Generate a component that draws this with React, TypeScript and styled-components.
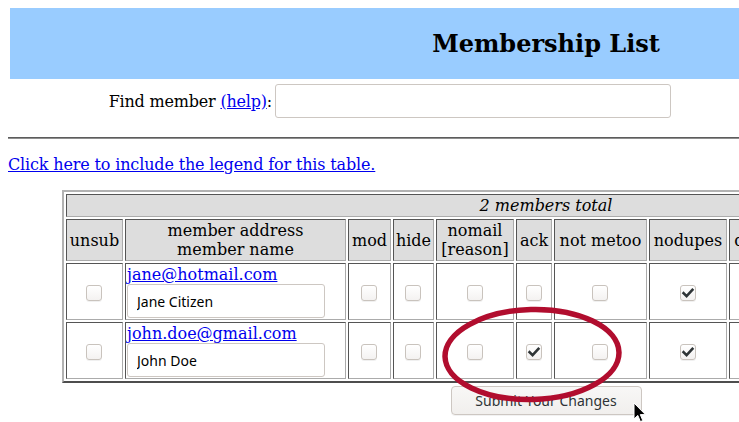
import React from "react";
import styled, { createGlobalStyle } from "styled-components";

const GlobalStyle = createGlobalStyle`
  html, body {
    margin: 0;
    padding: 0;
    overflow: hidden;
    background: #ffffff;
  }
  body {
    font-family: "DejaVu Serif", serif;
    font-size: 16px;
    color: #000000;
  }
`;

const Page = styled.div`
  position: relative;
  width: 1076px;
  padding: 8px;
`;

const TitleBar = styled.div`
  margin: 0 2px;
  height: 71px;
  background: #99ccff;
  display: flex;
  align-items: center;
  justify-content: center;
`;

const Title = styled.h1`
  margin: 0;
  font-family: "DejaVu Serif", serif;
  font-size: 24px;
  font-weight: bold;
`;

const FindRow = styled.div`
  display: grid;
  grid-template-columns: 264px 396px;
  column-gap: 3px;
  align-items: center;
  margin-top: 5px;
`;

const FindLabel = styled.label`
  text-align: right;
  letter-spacing: -0.2px;
`;

const Link = styled.a`
  color: #0000ee;
  text-decoration: underline;
`;

const TextField = styled.input<{ $w: number }>`
  display: block;
  box-sizing: border-box;
  width: ${(p) => p.$w}px;
  height: 34px;
  margin: 0;
  padding: 0 9px;
  border: 1px solid #cdc7c2;
  border-radius: 3px;
  background: #ffffff;
  font-family: "Noto Sans", sans-serif;
  font-size: 14px;
  color: #000000;
  outline: none;
`;

const Rule = styled.hr`
  margin: 19px 0 0;
  height: 0;
  border: none;
  border-top: 1px solid #5c5c5c;
  border-bottom: 1px solid #8e8e8e;
`;

const LegendLine = styled.p`
  margin: 16px 0 0;
  letter-spacing: -0.15px;
`;

const MembersTable = styled.table`
  width: 968px;
  margin: 16px auto 0;
  table-layout: fixed;
  border-collapse: separate;
  border-spacing: 2px;
  border: 2px solid;
  border-color: #b2b2b2 #4e4e4e #4e4e4e #b2b2b2;
`;

const Col = styled.col<{ $w: number }>`
  width: ${(p) => p.$w}px;
`;

const Cell = styled.td<{ $head?: boolean; $align?: "left" | "center" }>`
  box-sizing: border-box;
  padding: 1px;
  border: 1px solid;
  border-color: #555555 #ababab #ababab #555555;
  background: ${(p) => (p.$head ? "#dddddd" : "#ffffff")};
  text-align: ${(p) => p.$align ?? "center"};
  vertical-align: middle;
  white-space: nowrap;
  overflow: hidden;
`;

const Caption = styled.em`
  font-style: italic;
`;

const Box = styled.span<{ $on?: boolean }>`
  display: inline-flex;
  align-items: center;
  justify-content: center;
  box-sizing: border-box;
  width: 16px;
  height: 16px;
  vertical-align: middle;
  border: 1px solid #c9c3bd;
  border-radius: 3px;
  background: linear-gradient(#ffffff, #f4f2f1);
  box-shadow: 0 1px 0 rgba(0, 0, 0, 0.06);
`;

const MemberLink = styled(Link)`
  display: block;
  line-height: normal;
`;

const LangSelect = styled.select`
  font-family: "Noto Sans", sans-serif;
  font-size: 14px;
`;

const ButtonRow = styled.div`
  display: flex;
  justify-content: center;
  margin-top: 3px;
`;

const SubmitButton = styled.button`
  box-sizing: border-box;
  width: 191px;
  height: 29px;
  padding: 0;
  border: 1px solid #cdc7c2;
  border-radius: 4px;
  background: linear-gradient(#f8f7f6, #f1efed);
  box-shadow: 0 1px 0 rgba(0, 0, 0, 0.05);
  font-family: "Noto Sans", sans-serif;
  font-size: 14px;
  color: #2e3436;
`;

const Annotation = styled.svg`
  position: absolute;
  left: 436px;
  top: 302px;
  pointer-events: none;
`;

const Pointer = styled.svg`
  position: absolute;
  left: 633px;
  top: 402px;
  pointer-events: none;
`;

function Check({ on }: { on?: boolean }) {
  return (
    <Box $on={on}>
      {on && (
        <svg width="14" height="14" viewBox="0 0 14 14">
          <path
            d="M2.6 7.2 L5.6 10.1 L11.4 3.9"
            fill="none"
            stroke="#2e3436"
            strokeWidth="2.6"
            strokeLinecap="square"
          />
        </svg>
      )}
    </Box>
  );
}

type Member = {
  email: string;
  name: string;
  flags: boolean[];
};

const members: Member[] = [
  {
    email: "jane@hotmail.com",
    name: "Jane Citizen",
    flags: [false, false, false, false, false, false, true, false, false],
  },
  {
    email: "john.doe@gmail.com",
    name: "John Doe",
    flags: [false, false, false, false, true, false, true, false, false],
  },
];

const colWidths = [57, 221, 43, 41, 78, 36, 93, 78, 60, 55, 178];

export default function App() {
  return (
    <>
      <GlobalStyle />
      <Page>
        <TitleBar>
          <Title>Membership List</Title>
        </TitleBar>
        <FindRow>
          <FindLabel>
            Find member <Link href="#">(help)</Link>:
          </FindLabel>
          <TextField $w={396} type="text" defaultValue="" />
        </FindRow>
        <Rule />
        <LegendLine>
          <Link href="#">Click here to include the legend for this table.</Link>
        </LegendLine>
        <MembersTable>
          <colgroup>
            {colWidths.map((w, i) => (
              <Col key={i} $w={w} />
            ))}
          </colgroup>
          <tbody>
            <tr>
              <Cell $head colSpan={11}>
                <Caption>2 members total</Caption>
              </Cell>
            </tr>
            <tr>
              <Cell $head>unsub</Cell>
              <Cell $head>
                member address
                <br />
                member name
              </Cell>
              <Cell $head>mod</Cell>
              <Cell $head>hide</Cell>
              <Cell $head>
                nomail
                <br />
                [reason]
              </Cell>
              <Cell $head>ack</Cell>
              <Cell $head>not metoo</Cell>
              <Cell $head>nodupes</Cell>
              <Cell $head>digest</Cell>
              <Cell $head>plain</Cell>
              <Cell $head>language</Cell>
            </tr>
            {members.map((m) => (
              <tr key={m.email}>
                <Cell>
                  <Check on={m.flags[0]} />
                </Cell>
                <Cell $align="left">
                  <MemberLink href="#">{m.email}</MemberLink>
                  <TextField $w={198} type="text" defaultValue={m.name} />
                </Cell>
                <Cell>
                  <Check on={m.flags[1]} />
                </Cell>
                <Cell>
                  <Check on={m.flags[2]} />
                </Cell>
                <Cell>
                  <Check on={m.flags[3]} />
                </Cell>
                <Cell>
                  <Check on={m.flags[4]} />
                </Cell>
                <Cell>
                  <Check on={m.flags[5]} />
                </Cell>
                <Cell>
                  <Check on={m.flags[6]} />
                </Cell>
                <Cell>
                  <Check on={m.flags[7]} />
                </Cell>
                <Cell>
                  <Check on={m.flags[8]} />
                </Cell>
                <Cell>
                  <LangSelect defaultValue="en">
                    <option value="en">English (USA)</option>
                  </LangSelect>
                </Cell>
              </tr>
            ))}
          </tbody>
        </MembersTable>
        <ButtonRow>
          <SubmitButton type="button">Submit Your Changes</SubmitButton>
        </ButtonRow>

        <Annotation width="192" height="106" viewBox="0 0 192 106">
          <ellipse
            cx="96"
            cy="52.5"
            rx="87"
            ry="45"
            fill="none"
            stroke="#b10d2e"
            strokeWidth="5.5"
            transform="rotate(-1.5 96 52.5)"
          />
        </Annotation>
        <Pointer width="14" height="22" viewBox="0 0 14 22">
          <path
            d="M1 1 L1 17 L4.8 13.4 L7.4 19.6 L9.8 18.6 L7.3 12.6 L12.4 12.6 Z"
            fill="#000000"
            stroke="#ffffff"
            strokeWidth="1"
            strokeLinejoin="round"
          />
        </Pointer>
      </Page>
    </>
  );
}
